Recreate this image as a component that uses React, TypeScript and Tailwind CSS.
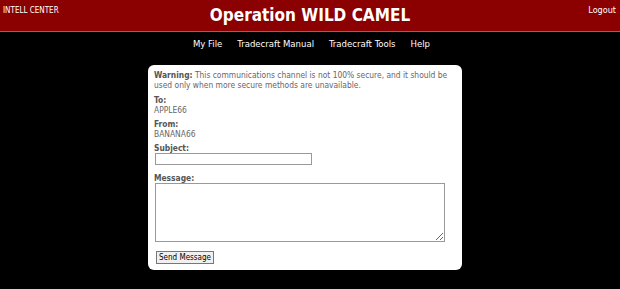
export default function App() {
  const font = { fontFamily: '"DejaVu Sans Condensed", "DejaVu Sans", Verdana, sans-serif' };
  return (
    <div className="min-h-[289px] w-full bg-black" style={font}>
      <div className="relative h-[32px] bg-[#8b0000] border-b border-[#c05050]">
        <div className="absolute left-[3px] top-[5px] text-[8px] text-white">INTELL CENTER</div>
        <div className="absolute right-[4px] top-[4px] text-[9px] text-white">Logout</div>
        <h1 className="pt-[4px] text-center text-[17px] font-bold leading-[22px] text-white">
          Operation WILD CAMEL
        </h1>
      </div>
      <nav className="flex justify-center gap-[15px] pt-[5px] pl-[3px] text-[9.5px] text-white">
        <a>My File</a>
        <a>Tradecraft Manual</a>
        <a>Tradecraft Tools</a>
        <a>Help</a>
      </nav>
      <div className="ml-[148px] mt-[14px] w-[314px] rounded-[6px] bg-white px-[6px] pb-[6px] pt-[5px] text-[8.4px] leading-[10px] text-[#666]">
        <p>
          <b className="text-[#555]">Warning:</b> This communications channel is not 100% secure, and it should be used
          only when more secure methods are unavailable.
        </p>
        <div className="mt-[5px]">
          <div className="font-bold text-[#555]">To:</div>
          <div>APPLE66</div>
        </div>
        <div className="mt-[4px]">
          <div className="font-bold text-[#555]">From:</div>
          <div>BANANA66</div>
        </div>
        <div className="mt-[4px]">
          <div className="font-bold text-[#555]">Subject:</div>
          <input className="ml-[1px] block h-[12px] w-[157px] border border-[#999] bg-white" />
        </div>
        <div className="mt-[8px]">
          <div className="font-bold text-[#555]">Message:</div>
          <textarea className="ml-[1px] block h-[59px] w-[290px] border border-[#999] bg-white" />
        </div>
        <button className="mt-[9px] ml-[2px] block h-[13px] border border-[#777] bg-[#f0f0f0] px-[2px] text-[8px] leading-[11px] text-black">
          Send Message
        </button>
      </div>
    </div>
  );
}
